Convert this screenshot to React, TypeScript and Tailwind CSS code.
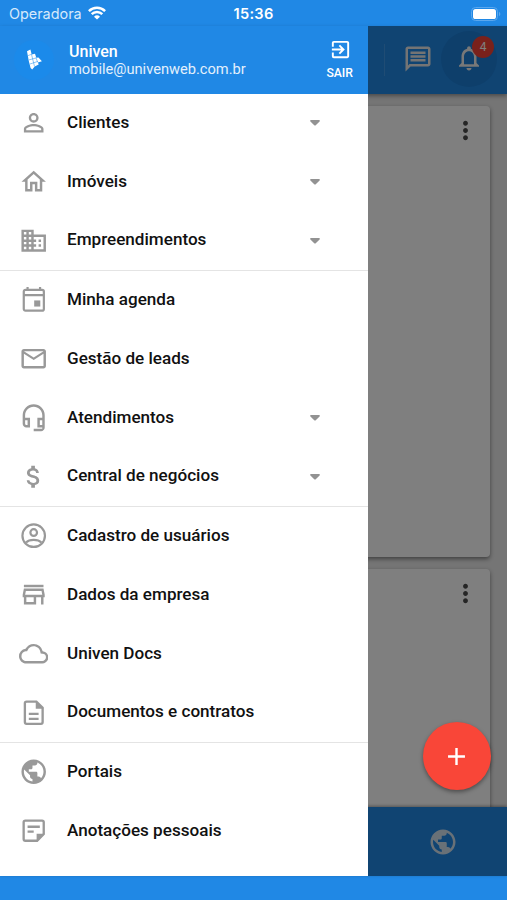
import React from 'react';
import type { IconType } from 'react-icons';
import {
  MdAdd,
  MdAttachMoney,
  MdExitToApp,
  MdMoreVert,
  MdNotificationsNone,
  MdOutlineBusiness,
  MdOutlineCloud,
  MdOutlineEmail,
  MdOutlineHeadsetMic,
  MdOutlineHome,
  MdOutlineMessage,
  MdPersonOutline,
  MdPublic,
} from 'react-icons/md';

type DrawnIcon = React.FC<{ className?: string }>;

interface MenuItem {
  label: string;
  icon: IconType | DrawnIcon;
  expandable?: boolean;
}

const AgendaIcon: DrawnIcon = ({ className }) => (
  <svg viewBox="0 0 24 24" className={className} fill="none" stroke="currentColor" strokeWidth="1.8">
    <rect x="3.9" y="4" width="16.4" height="17" rx="1.4" />
    <path d="M4 8.3h16.2M7 1.6v2.8M17.2 1.6v2.8" />
    <path d="M12.4 12.6h5v5h-5z" fill="currentColor" stroke="none" />
  </svg>
);

const UserCircleIcon: DrawnIcon = ({ className }) => (
  <svg viewBox="0 0 24 24" className={className} fill="none" stroke="currentColor" strokeWidth="1.8">
    <circle cx="12" cy="12" r="9.2" />
    <circle cx="12" cy="9.4" r="2.7" />
    <path d="M5.7 17.6c1.4-1.5 3.8-2.2 6.3-2.2s4.9.7 6.3 2.2" />
  </svg>
);

const StoreIcon: DrawnIcon = ({ className }) => (
  <svg viewBox="0 0 24 24" className={className} fill="currentColor">
    <path d="M4 3.9h16v2H4z" />
    <path
      fillRule="evenodd"
      d="M4 7h16l1 5v2h-1v6h-2v-6h-4v6H4v-6H3v-2l1-5zm2 7v4h6v-4H6zM5.6 9l-.6 3.1h14L18.4 9H5.6z"
    />
  </svg>
);

const DocumentIcon: DrawnIcon = ({ className }) => (
  <svg viewBox="0 0 24 24" className={className} fill="none" stroke="currentColor" strokeWidth="1.9">
    <path d="M14.2 2.9H6.2c-.8 0-1.4.6-1.4 1.4v15.4c0 .8.6 1.4 1.4 1.4h11.7c.8 0 1.4-.6 1.4-1.4V8z" />
    <path d="M13.7 2.3v6.4H20z" fill="currentColor" stroke="none" />
    <path d="M8 13h8M8 17h8" />
  </svg>
);

const NoteIcon: DrawnIcon = ({ className }) => (
  <svg viewBox="0 0 24 24" className={className} fill="none" stroke="currentColor" strokeWidth="1.9">
    <path d="M14.8 20.2H5.2c-.8 0-1.4-.6-1.4-1.4V5.2c0-.8.6-1.4 1.4-1.4h13.6c.8 0 1.4.6 1.4 1.4v9.6z" />
    <path d="M14.4 20.8v-6.3h6.3z" fill="currentColor" stroke="none" />
    <path d="M7 8.8h10M7 12.8h5" />
  </svg>
);

const sections: MenuItem[][] = [
  [
    { label: 'Clientes', icon: MdPersonOutline, expandable: true },
    { label: 'Imóveis', icon: MdOutlineHome, expandable: true },
    { label: 'Empreendimentos', icon: MdOutlineBusiness, expandable: true },
  ],
  [
    { label: 'Minha agenda', icon: AgendaIcon },
    { label: 'Gestão de leads', icon: MdOutlineEmail },
    { label: 'Atendimentos', icon: MdOutlineHeadsetMic, expandable: true },
    { label: 'Central de negócios', icon: MdAttachMoney, expandable: true },
  ],
  [
    { label: 'Cadastro de usuários', icon: UserCircleIcon },
    { label: 'Dados da empresa', icon: StoreIcon },
    { label: 'Univen Docs', icon: MdOutlineCloud },
    { label: 'Documentos e contratos', icon: DocumentIcon },
  ],
  [
    { label: 'Portais', icon: MdPublic },
    { label: 'Anotações pessoais', icon: NoteIcon },
  ],
];

const StatusBar = () => (
  <div className="grid h-[26px] shrink-0 grid-cols-3 items-center bg-[#2088e5] px-[9px] pt-[2px] font-['Inter',sans-serif] text-white">
    <div className="flex items-center gap-[6px]">
      <span className="text-[14.4px] leading-none text-[#d5e9fb]">Operadora</span>
      <svg viewBox="0 0 18 14" className="mt-[-2px] h-[14px] w-[18px]" fill="none" stroke="white" strokeWidth="2.5">
        <path d="M.9 5.1a11.7 11.7 0 0 1 16.2 0M3.7 8.2a7.6 7.6 0 0 1 10.6 0" />
        <path d="M9 13.6 6 10.7a4.3 4.3 0 0 1 6 0z" fill="white" stroke="none" />
      </svg>
    </div>
    <span className="text-center text-[14.6px] leading-none font-semibold tracking-[0.3px]">15:36</span>
    <svg viewBox="0 0 30 14" className="mt-[-1px] mr-[-3px] h-[14px] w-[30px] justify-self-end">
      <rect x=".5" y=".5" width="26" height="13" rx="4" fill="none" stroke="#5ba7ed" />
      <rect x="2" y="2" width="23" height="10" rx="2.6" fill="white" />
      <path d="M28 4.8c1.8.7 1.8 3.7 0 4.4z" fill="#5ba7ed" />
    </svg>
  </div>
);

const Logo = () => (
  <svg viewBox="0 0 44 44" className="h-11 w-11">
    <circle cx="22" cy="22" r="20" fill="#1b8aea" />
    <path
      d="M15 13.2l3.4-1.8 1.3 5.2 3.3-.9 1.3 4.1 2.2-.2 3.4 3.6-4 1.2.8 2-4 2.1-2.5 2.9-1.6-1.5-1.8-6.9z"
      fill="white"
    />
    <path
      d="M16 17.6l3.8-1.4M17 21.9l7.2-2M18 26l7.8-2.6M19.5 16.4l3 12M24 19.8l1.7 4.6"
      fill="none"
      stroke="#1b8aea"
      strokeWidth=".5"
    />
  </svg>
);

const Menu = () => (
  <aside className="absolute top-0 bottom-0 left-0 flex w-[368px] flex-col bg-white">
    <header className="flex h-[68px] shrink-0 items-center bg-[#2088e5] pl-[12px] text-white">
      <Logo />
      <div className="ml-[13px] flex-1 pt-px">
        <p className="text-[16px] leading-[17px] font-medium">Univen</p>
        <p className="text-[14.65px] leading-[18px] text-[#e3f0fc]">mobile@univenweb.com.br</p>
      </div>
      <button className="mr-[15px] flex flex-col items-center">
        <MdExitToApp className="mt-[-2px] ml-[2px] h-[23px] w-[23px]" />
        <span className="mt-[5px] text-[12.2px] leading-[14px] font-medium">SAIR</span>
      </button>
    </header>
    <nav>
      {sections.map((items, index) => (
        <ul key={index} className={index > 0 ? 'border-t border-[#e4e4e4]' : ''}>
          {items.map(({ label, icon: Icon, expandable }) => (
            <li key={label} className="flex h-[58.75px] items-center pl-[19px]">
              <Icon className="mb-[1px] h-[29.4px] w-[29.4px] shrink-0 text-[#999]" />
              <span className="ml-[18.6px] w-[243px] pb-[3px] text-[17.1px] leading-[24px] font-medium text-[#111]">
                {label}
              </span>
              {expandable && (
                <svg viewBox="0 0 10 6" className="h-[6px] w-[10px]" fill="#929292">
                  <path d="M1 0h8c.8 0 1.2.8.6 1.4L6 5.1a1.4 1.4 0 0 1-2 0L.4 1.4C-.2.8.2 0 1 0z" />
                </svg>
              )}
            </li>
          ))}
        </ul>
      ))}
    </nav>
  </aside>
);

const Card = ({ className }: { className: string }) => (
  <div className={`flex items-start justify-end rounded-sm bg-white shadow-[0_2px_4px_rgba(0,0,0,0.45)] ${className}`}>
    <MdMoreVert className="mt-[10px] mr-[10px] h-[29px] w-[29px] text-[#4a4a4a]" />
  </div>
);

const App: React.FC = () => {
  return (
    <div className="flex h-[900px] w-[507px] flex-col overflow-hidden bg-[#2088e5] font-['Roboto',sans-serif]">
      <StatusBar />
      <div className="relative flex h-[850px] shrink-0 flex-col bg-[#eaeaea]">
        <header className="z-0 flex h-[68px] shrink-0 items-center justify-end bg-[#2088e5] pr-[10px] text-white shadow-[0_2px_4px_rgba(0,0,0,0.35)]">
          <div className="h-[32px] w-px bg-[#3f98e8]" />
          <MdOutlineMessage className="mt-[-3px] mr-[8px] ml-[18px] h-[30px] w-[30px] text-[#e8e8e8]" />
          <div className="relative mt-[-2px] flex h-[56px] w-[56px] items-center justify-center rounded-full bg-[#1c7ed6]">
            <MdNotificationsNone className="mt-[-2px] mr-px h-[30px] w-[30px] text-[#f0f0f0]" />
            <span className="absolute top-[5px] right-[3px] flex h-[22px] w-[22px] items-center justify-center rounded-full bg-[#f44336] text-[12px]">
              4
            </span>
          </div>
        </header>

        {/* Dashboard cards */}
        <main className="flex min-h-0 flex-1 flex-col gap-[12px] overflow-hidden px-[17px] pt-[12px]">
          <Card className="h-[451px] shrink-0" />
          <Card className="h-[260px] shrink-0" />
        </main>

        <footer className="z-0 flex h-[69px] shrink-0 items-center justify-end bg-[#2088e5] pr-[49px] shadow-[0_-1px_3px_rgba(0,0,0,0.35)]">
          <MdPublic className="h-[30px] w-[30px] text-[#d3e3ef]" />
        </footer>

        <div className="absolute inset-0 z-10 bg-black/50" />
        <button className="absolute right-[16px] bottom-[86px] z-20 flex h-[68px] w-[68px] items-center justify-center rounded-full bg-[#f94638] text-white shadow-[0_2px_4px_rgba(0,0,0,0.4)]">
          <MdAdd className="mr-px h-[29px] w-[29px]" />
        </button>
        <div className="absolute inset-y-0 left-0 z-30">
          <Menu />
        </div>
      </div>
    </div>
  );
};

export default App;
